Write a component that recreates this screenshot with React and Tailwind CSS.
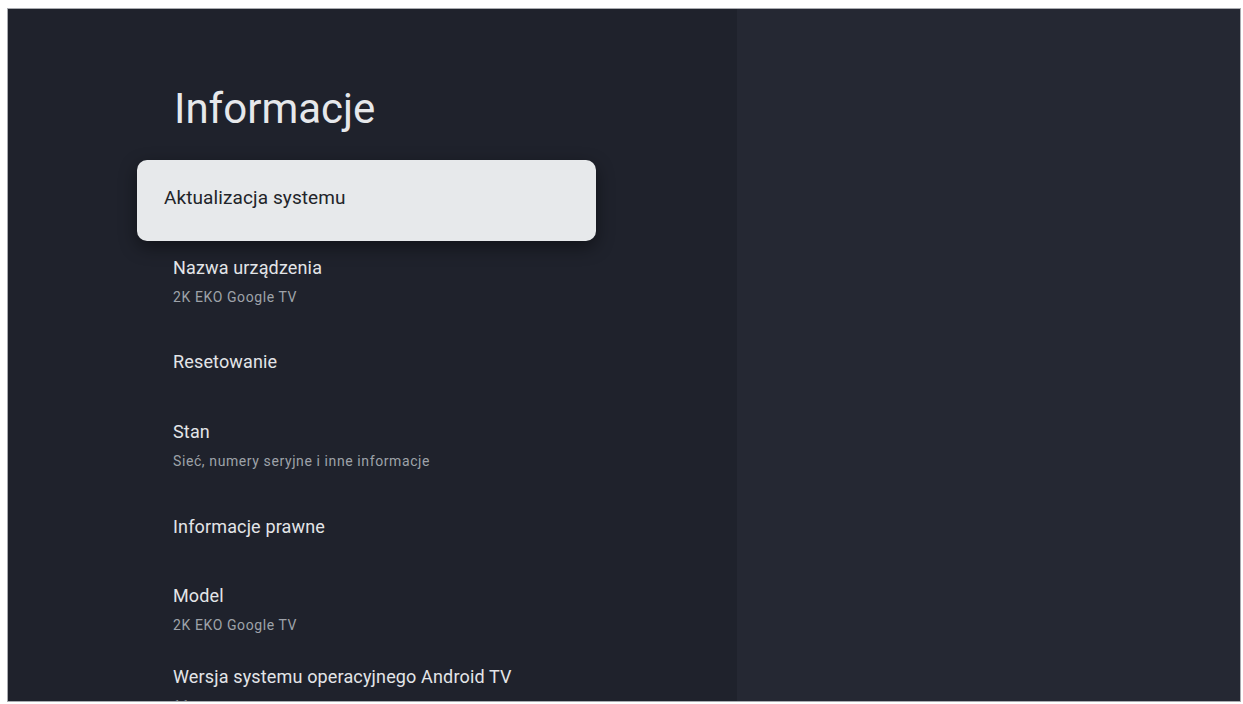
import React from "react";

const items = [
  { title: "Nazwa urządzenia", sub: "2K EKO Google TV", h: "h-[94px]" },
  { title: "Resetowanie", h: "h-[70px]" },
  { title: "Stan", sub: "Sieć, numery seryjne i inne informacje", h: "h-[95px]" },
  { title: "Informacje prawne", h: "h-[69px]" },
  { title: "Model", sub: "2K EKO Google TV", h: "h-[81px]" },
  { title: "Wersja systemu operacyjnego Android TV", sub: "11", h: "h-[60px]" },
];

const App = () => {
  return (
    <div className="w-[1243px] h-[704px] bg-white overflow-hidden" style={{ fontFamily: "Roboto, 'Noto Sans', sans-serif" }}>
      <div className="ml-[7px] mt-[8px] w-[1234px] h-[694px] border border-[#a9abb0] flex overflow-hidden">
        {/* Settings list */}
        <div className="w-[729px] h-full bg-[#1f222c] flex flex-col">
          <h1 className="mt-[76px] ml-[166px] text-[42px] leading-[48px] text-[#e6e8eb] font-normal">
            Informacje
          </h1>

          {/* Focused row (scaled up like Google TV does) */}
          <div className="mt-[27px] ml-[129px] w-[459px] h-[81px] rounded-[10px] bg-[#e7e9eb] shadow-[0_6px_18px_rgba(0,0,0,0.45)] flex items-center pl-[27px] pb-[5px] shrink-0">
            <span className="text-[19px] leading-[24px] tracking-[0.1px] text-[#222429]">Aktualizacja systemu</span>
          </div>

          <div className="mt-[15px] ml-[165px] flex flex-col">
            {items.map((item, i) => (
              <div key={i} className={`${item.h} shrink-0 flex flex-col`}>
                <span className="text-[18px] leading-[24px] tracking-[0.15px] text-[#e3e5e8]">{item.title}</span>
                {item.sub && (
                  <span className="mt-2 text-[14px] leading-[18px] tracking-[0.6px] text-[#9ea2a9]">{item.sub}</span>
                )}
              </div>
            ))}
          </div>
        </div>

        {/* Empty detail pane */}
        <div className="flex-1 h-full bg-[#252833]" />
      </div>
    </div>
  );
};

export default App;
